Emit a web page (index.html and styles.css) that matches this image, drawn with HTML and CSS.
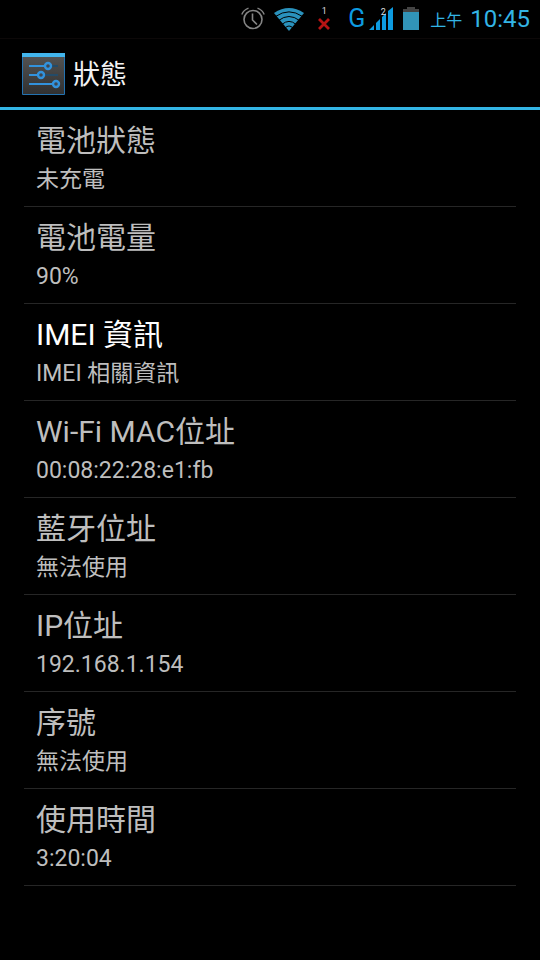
FILE: index.html
```html
<!DOCTYPE html>
<html lang="zh-Hant">
<head>
<meta charset="UTF-8">
<meta name="viewport" content="width=device-width">
<title>狀態</title>
<link rel="stylesheet" href="styles.css">
</head>
<body>
<div class="statusbar">
    <svg class="alarm" width="24" height="24" viewBox="0 0 24 24" fill="none" stroke="#858585">
        <circle cx="12" cy="12.500" r="9" stroke-width="1.600"/>
        <path d="M11.500 6.500V13l4.500 4.500" stroke-width="1.600"/>
        <path d="M.8 7.500Q2.500 3 7.500 1.200M16.500 1.200Q21.500 3 23.200 7.500" stroke-width="1.400"/>
    </svg>
    <svg class="wifi" width="30" height="23" viewBox="0 0 30 23">
        <path d="M0 5Q15-5 30 5L15 23Z" fill="#2a92bd"/>
        <path d="M1.500 8.500Q15-.8 28.500 8.500M4.500 12.500Q15 4.500 25.500 12.500M8 16.300Q15 10.500 22 16.300M11 20Q15 16 19 20" fill="none" stroke="#000" stroke-width="1"/>
    </svg>
    <div class="sim">
        <span class="slot">1</span>
        <svg width="12" height="12" viewBox="0 0 12 12" stroke="#b81414" stroke-width="2.800"><path d="M1 1l10 10M11 1L1 11"/></svg>
    </div>
    <span class="network">G</span>
    <div class="signal">
        <span class="slot">2</span>
        <svg width="24" height="24" viewBox="0 0 24 24" fill="#0d9be0">
            <path d="M0 23l5-5v5zM7 16l4-4v11H7zM13 10l4-4v17h-4zM19 4l5-4v23h-5z"/>
        </svg>
    </div>
    <svg class="battery" width="16" height="24" viewBox="0 0 16 24">
        <path d="M4 0h8v2h4v4H0V2h4z" fill="#444"/>
        <path d="M0 5h16v18H0z" fill="#3194b8"/>
    </svg>
    <span class="ampm">上午</span>
    <time class="clock">10:45</time>
</div>
<header class="header">
    <svg width="43" height="42" viewBox="0 0 43 42">
        <defs>
            <linearGradient id="panel" x2="0" y2="1"><stop stop-color="#555"/><stop offset="1" stop-color="#303030"/></linearGradient>
        </defs>
        <path d="M.5.500h42v41H.5z" fill="url(#panel)" stroke="#2372b0"/>
        <path d="M0 0h43v4H0z" fill="#42b5ec"/>
        <path d="M7 13h29M7 22h29M7 31h29" stroke="#244b68" stroke-width="2"/>
        <path d="M7 13h16M7 22h9M7 31h24" stroke="#3292dc" stroke-width="2"/>
        <g fill="#3d4650" stroke="#3292dc" stroke-width="2.400">
            <circle cx="26" cy="13" r="3"/><circle cx="19" cy="22" r="3"/><circle cx="34" cy="31" r="3"/>
        </g>
    </svg>
    <h1>狀態</h1>
</header>
<main class="list">
    <div class="item"><h2>電池狀態</h2><p>未充電</p></div>
    <div class="item"><h2>電池電量</h2><p>90%</p></div>
    <div class="item active"><h2>IMEI 資訊</h2><p>IMEI 相關資訊</p></div>
    <div class="item"><h2>Wi-Fi MAC位址</h2><p>00:08:22:28:e1:fb</p></div>
    <div class="item"><h2>藍牙位址</h2><p>無法使用</p></div>
    <div class="item"><h2>IP位址</h2><p>192.168.1.154</p></div>
    <div class="item"><h2>序號</h2><p>無法使用</p></div>
    <div class="item"><h2>使用時間</h2><p>3:20:04</p></div>
</main>
</body>
</html>
```
FILE: styles.css
```css
*{margin:0;padding:0;box-sizing:border-box}
body{background:#000;color:#bebebe;font-family:Roboto,'Noto Sans CJK TC',sans-serif}
svg{display:block;flex:none}

/* Status bar */
.statusbar{display:flex;align-items:center;justify-content:flex-end;height:39px;padding:0 10px;border-bottom:1px solid #0c0808;color:#33b5e5}
.wifi{margin-left:9px}
.sim{position:relative;margin-left:14px;padding-top:9px}
.network{margin-left:18px;font-size:25px;line-height:38px;color:#0d9be0}
.signal{position:relative;margin-left:4px}
.slot{position:absolute;left:0;top:-4px;width:100%;font-size:9px;line-height:12px;text-align:center;color:#ddd}
.signal .slot{top:-1px;left:2px}
.battery{margin-left:10px}
.ampm{margin-left:11px;padding-top:4px;font-size:16px;line-height:24px}
.clock{margin-left:8px;font-size:24px;line-height:38px}

/* Title */
.header{display:flex;align-items:center;gap:8px;height:71px;padding:2px 22px 0;border-bottom:3px solid #33b5e5;color:#f3f3f3}
.header h1{padding-top:2px;font-size:27px;line-height:40px;font-weight:400}

/* Status list */
.list{padding:0 24px}
.item{padding:11px 12px 7px;border-bottom:1px solid #262626}
.item h2{font-size:30px;line-height:40px;font-weight:400}
.item p{font-size:23px;line-height:38px}
.active h2{color:#fff}
```
